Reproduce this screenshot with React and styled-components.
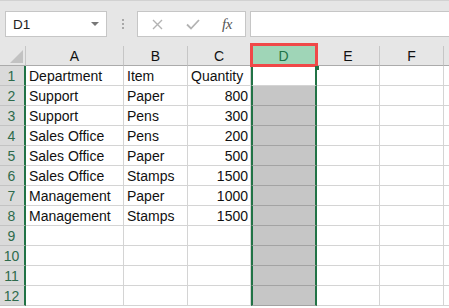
import React from "react";
import styled, { createGlobalStyle } from "styled-components";

const Global = createGlobalStyle`
  html, body { margin: 0; padding: 0; background: #fff; overflow: hidden; }
  * { box-sizing: border-box; }
`;

const Page = styled.div`
  position: relative;
  width: 449px;
  height: 308px;
  overflow: hidden;
  font-family: "Liberation Sans", Arial, sans-serif;
`;

const Toolbar = styled.div`
  height: 46px;
  background: #e6e6e6;
  border-top: 1px solid #d2d2d2;
  display: flex;
  align-items: flex-start;
  padding-top: 10px;
  padding-left: 5px;
`;

const NameBox = styled.div`
  width: 102px;
  height: 26px;
  background: #fff;
  border: 1px solid #c6c6c6;
  display: flex;
  align-items: center;
  justify-content: space-between;
  padding: 0 6px 0 7px;
  font-size: 13.5px;
  color: #222;
`;

const DropArrow = styled.span`
  width: 0;
  height: 0;
  border-left: 4px solid transparent;
  border-right: 4px solid transparent;
  border-top: 4px solid #777;
  margin-right: 1px;
`;

const Grip = styled.div`
  width: 30px;
  height: 26px;
  display: flex;
  flex-direction: column;
  align-items: center;
  justify-content: center;
  gap: 2px;
  padding-left: 2px;
  & > span {
    width: 2px;
    height: 2px;
    background: #a8a8a8;
  }
`;

const FormulaButtons = styled.div`
  width: 109px;
  height: 26px;
  background: #fff;
  border: 1px solid #c6c6c6;
  display: flex;
  align-items: center;
  padding-left: 14px;
`;

const IconSlot = styled.span`
  width: ${(p) => p.$w}px;
  display: flex;
  align-items: center;
`;

const Fx = styled.span`
  font-family: "Liberation Serif", "Times New Roman", serif;
  font-style: italic;
  font-size: 15px;
  color: #555;
  letter-spacing: -0.5px;
`;

const FormulaInput = styled.div`
  flex: 1;
  height: 26px;
  margin-left: 4px;
  margin-right: -2px;
  background: #fff;
  border: 1px solid #c6c6c6;
`;

const Sheet = styled.div`
  display: grid;
  grid-template-columns: 26px 98px 64px 63px 66px 63px 64px 1fr;
  grid-auto-rows: 20px;
`;

const Corner = styled.div`
  position: relative;
  background: #e6e6e6;
  border-bottom: 1px solid #ababab;
  border-right: 1px solid #c6c6c6;
  overflow: hidden;
  &::after {
    content: "";
    position: absolute;
    right: 2px;
    bottom: 2px;
    width: 0;
    height: 0;
    border-left: 13px solid transparent;
    border-bottom: 13px solid #c2c2c2;
  }
`;

const ColHead = styled.div`
  background: ${(p) => (p.$selected ? "#9fd5b7" : "#e6e6e6")};
  border-bottom: ${(p) => (p.$selected ? "2px solid #217346" : "1px solid #ababab")};
  border-right: 1px solid #c6c6c6;
  display: flex;
  align-items: center;
  justify-content: center;
  font-size: 14px;
  color: ${(p) => (p.$selected ? "#217346" : "#111")};
  padding-top: 1px;
`;

const RowHead = styled.div`
  background: #dadada;
  border-bottom: 1px solid #c3c3c3;
  border-right: 2px solid #217346;
  display: flex;
  align-items: center;
  justify-content: center;
  font-size: 14px;
  color: #2e6b4c;
  padding-right: 1px;
`;

const Cell = styled.div`
  border-bottom: 1px solid ${(p) => (p.$selected && !p.$active ? "#a3a3a3" : "#d4d4d4")};
  border-right: ${(p) => (p.$selected ? "2px solid #217346" : "1px solid #d4d4d4")};
  border-left: ${(p) => (p.$selected ? "2px solid #217346" : "none")};
  background: ${(p) => (p.$selected && !p.$active ? "#c6c6c6" : "#fff")};
  display: flex;
  align-items: center;
  justify-content: ${(p) => (p.$num ? "flex-end" : "flex-start")};
  padding: 1px 2px 0 3px;
  font-size: 14px;
  color: #111;
  white-space: nowrap;
  overflow: visible;
`;

const Annotation = styled.div`
  position: absolute;
  left: 250px;
  top: 43px;
  width: 68px;
  height: 24px;
  border: 3px solid #f04848;
  pointer-events: none;
`;

const Handle = styled.div`
  position: absolute;
  left: 315px;
  top: 66px;
  width: 4px;
  height: 4px;
  background: #217346;
`;

const cols = ["A", "B", "C", "D", "E", "F", ""];

const data = [
  ["Department", "Item", "Quantity"],
  ["Support", "Paper", 800],
  ["Support", "Pens", 300],
  ["Sales Office", "Pens", 200],
  ["Sales Office", "Paper", 500],
  ["Sales Office", "Stamps", 1500],
  ["Management", "Paper", 1000],
  ["Management", "Stamps", 1500],
  [],
  [],
  [],
  [],
];

export default function App() {
  return (
    <Page>
      <Global />
      <Toolbar>
        <NameBox>
          <span>D1</span>
          <DropArrow />
        </NameBox>
        <Grip>
          <span />
          <span />
          <span />
        </Grip>
        <FormulaButtons>
          <IconSlot $w={34}>
            <svg width="11" height="11" viewBox="0 0 11 11">
              <path d="M1 1 L10 10 M10 1 L1 10" stroke="#b3b3b3" strokeWidth="1.4" fill="none" />
            </svg>
          </IconSlot>
          <IconSlot $w={36}>
            <svg width="14" height="11" viewBox="0 0 14 11">
              <path d="M1 5.5 L5 9.5 L13 1" stroke="#b3b3b3" strokeWidth="1.8" fill="none" />
            </svg>
          </IconSlot>
          <IconSlot $w={16}>
            <Fx>fx</Fx>
          </IconSlot>
        </FormulaButtons>
        <FormulaInput />
      </Toolbar>
      <Sheet>
        <Corner />
        {cols.map((c, i) => (
          <ColHead key={i} $selected={c === "D"}>
            {c}
          </ColHead>
        ))}
        {data.map((row, r) => (
          <React.Fragment key={r}>
            <RowHead>{r + 1}</RowHead>
            {cols.map((c, ci) => {
              const v = row[ci];
              return (
                <Cell
                  key={ci}
                  $selected={c === "D"}
                  $active={c === "D" && r === 0}
                  $num={typeof v === "number"}
                >
                  {v}
                </Cell>
              );
            })}
          </React.Fragment>
        ))}
      </Sheet>
      <Annotation />
      <Handle />
    </Page>
  );
}
